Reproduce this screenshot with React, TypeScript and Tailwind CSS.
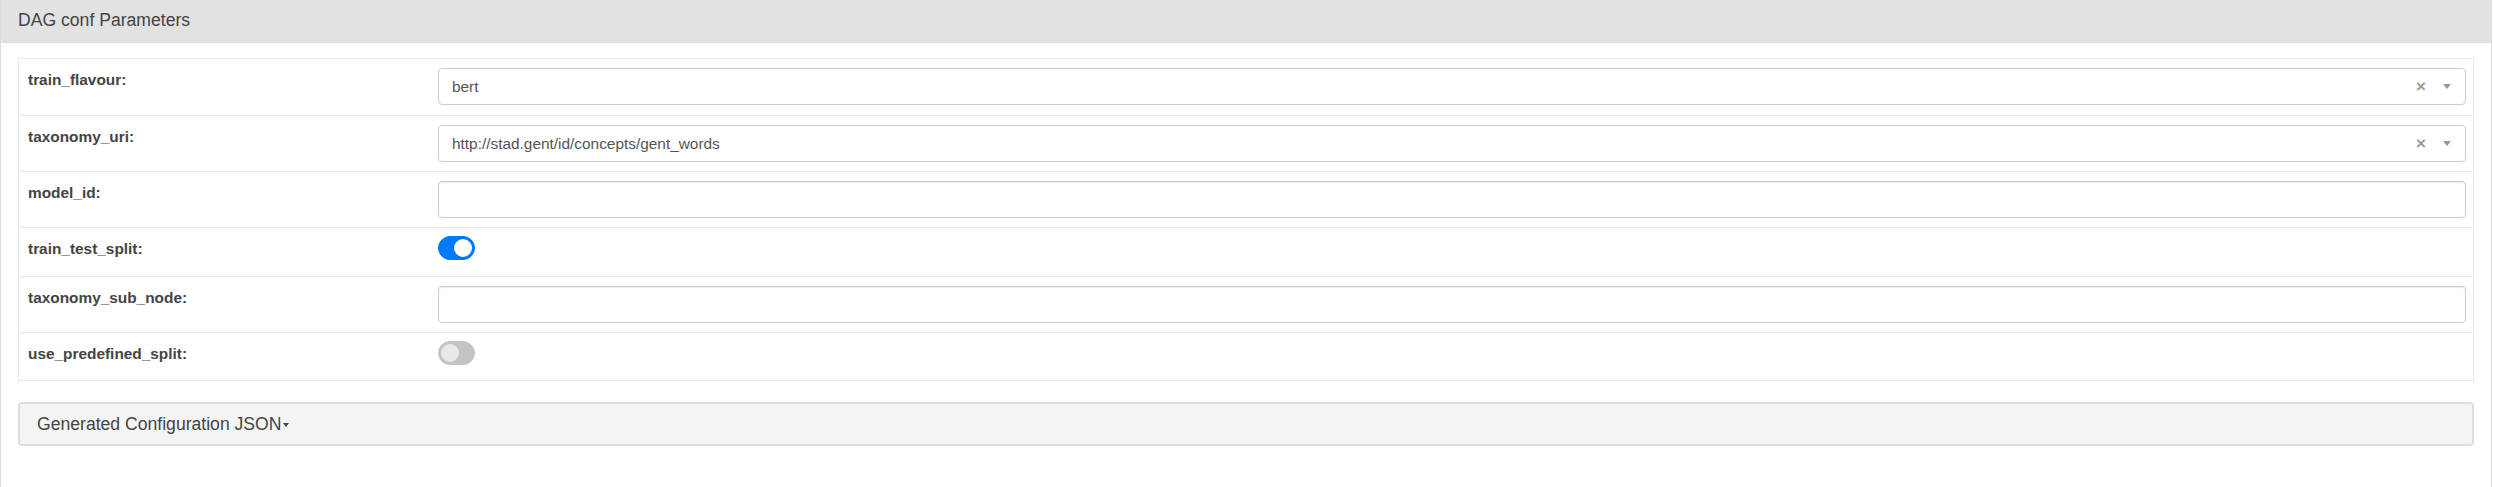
import React from 'react';

type Field =
  | { name: string; kind: 'select'; value: string; h: string }
  | { name: string; kind: 'text'; h: string }
  | { name: string; kind: 'switch'; on: boolean; h: string };

const FIELDS: Field[] = [
  { name: 'train_flavour', kind: 'select', value: 'bert', h: 'h-[56px]' },
  { name: 'taxonomy_uri', kind: 'select', value: 'http://stad.gent/id/concepts/gent_words', h: 'h-[56px]' },
  { name: 'model_id', kind: 'text', h: 'h-[56px]' },
  { name: 'train_test_split', kind: 'switch', on: true, h: 'h-[49px]' },
  { name: 'taxonomy_sub_node', kind: 'text', h: 'h-[56px]' },
  { name: 'use_predefined_split', kind: 'switch', on: false, h: 'h-[48px]' },
];

function SelectBox({ value }: { value: string }) {
  return (
    <div className="flex items-center h-[37px] w-full border border-[#cccccc] rounded-[4px] bg-white pl-[13px] pr-[14px]">
      <span className="flex-1 text-[15.4px] leading-[22px] text-[#555555] truncate">{value}</span>
      <span className="text-[17px] leading-none font-bold text-[#999999] mr-[17px] -mt-[1px]">×</span>
      <span className="w-0 h-0 border-l-[4.5px] border-r-[4.5px] border-t-[5px] border-l-transparent border-r-transparent border-t-[#999999]" />
    </div>
  );
}

function TextBox() {
  return (
    <div className="h-[37px] w-full border border-[#cccccc] rounded-[4px] bg-white shadow-[inset_0_1px_1px_rgba(0,0,0,0.075)]" />
  );
}

function Switch({ on }: { on: boolean }) {
  return on ? (
    <div className="flex items-center justify-end w-[37px] h-[24px] rounded-full bg-[#007bff] border border-[#007bff]">
      <div className="w-[22px] h-[22px] rounded-full bg-white border-2 border-[#007bff]" />
    </div>
  ) : (
    <div className="flex items-center justify-start w-[37px] h-[24px] rounded-full bg-[#c4c4c4] border border-[#c4c4c4]">
      <div className="w-[22px] h-[22px] rounded-full bg-[#e9e9e9] border-2 border-[#c4c4c4]" />
    </div>
  );
}

export default function App() {
  return (
    <div className="w-[2493px] h-[487px] overflow-hidden bg-white font-['Liberation_Sans',Arial,sans-serif]">
      <div className="w-[2492px] h-[500px] border border-[#dddddd] border-t-0">
        {/* Panel heading */}
        <div className="h-[43px] bg-[#e2e2e2] px-[17px] pt-[11px] border-b border-[#dddddd]">
          <h3 className="text-[17.6px] leading-[19px] text-[#444444]">DAG conf Parameters</h3>
        </div>

        {/* Panel body */}
        <div className="px-[17px] pt-[15px]">
          <div className="border border-[#e8e8e8]">
            {FIELDS.map((f, i) => (
              <div
                key={f.name}
                className={`flex ${f.h} ${i > 0 ? 'border-t border-[#e8e8e8]' : ''}`}
              >
                <div className="w-[419px] shrink-0 pl-[9px] pr-[10px] pt-[3px]">
                  <label className="block pt-[7px] text-[15.4px] leading-[22px] font-bold text-[#444444]">
                    {f.name}:
                  </label>
                </div>
                <div className={`flex-1 pr-[7px] ${f.kind === 'switch' ? 'pt-[8px]' : 'pt-[9px]'}`}>
                  {f.kind === 'select' && <SelectBox value={f.value} />}
                  {f.kind === 'text' && <TextBox />}
                  {f.kind === 'switch' && <Switch on={f.on} />}
                </div>
              </div>
            ))}
          </div>

          {/* Generated config toggle */}
          <div className="mt-[21px] h-[44px] flex items-center bg-[#f4f4f4] border-2 border-[#dedede] rounded-[4px] px-[17px]">
            <span className="text-[17.6px] leading-[22px] text-[#444444]">Generated Configuration JSON</span>
            <span className="ml-[1px] mt-[2px] w-0 h-0 border-l-[3.5px] border-r-[3.5px] border-t-[4px] border-l-transparent border-r-transparent border-t-[#444444]" />
          </div>
        </div>
      </div>
    </div>
  );
}
